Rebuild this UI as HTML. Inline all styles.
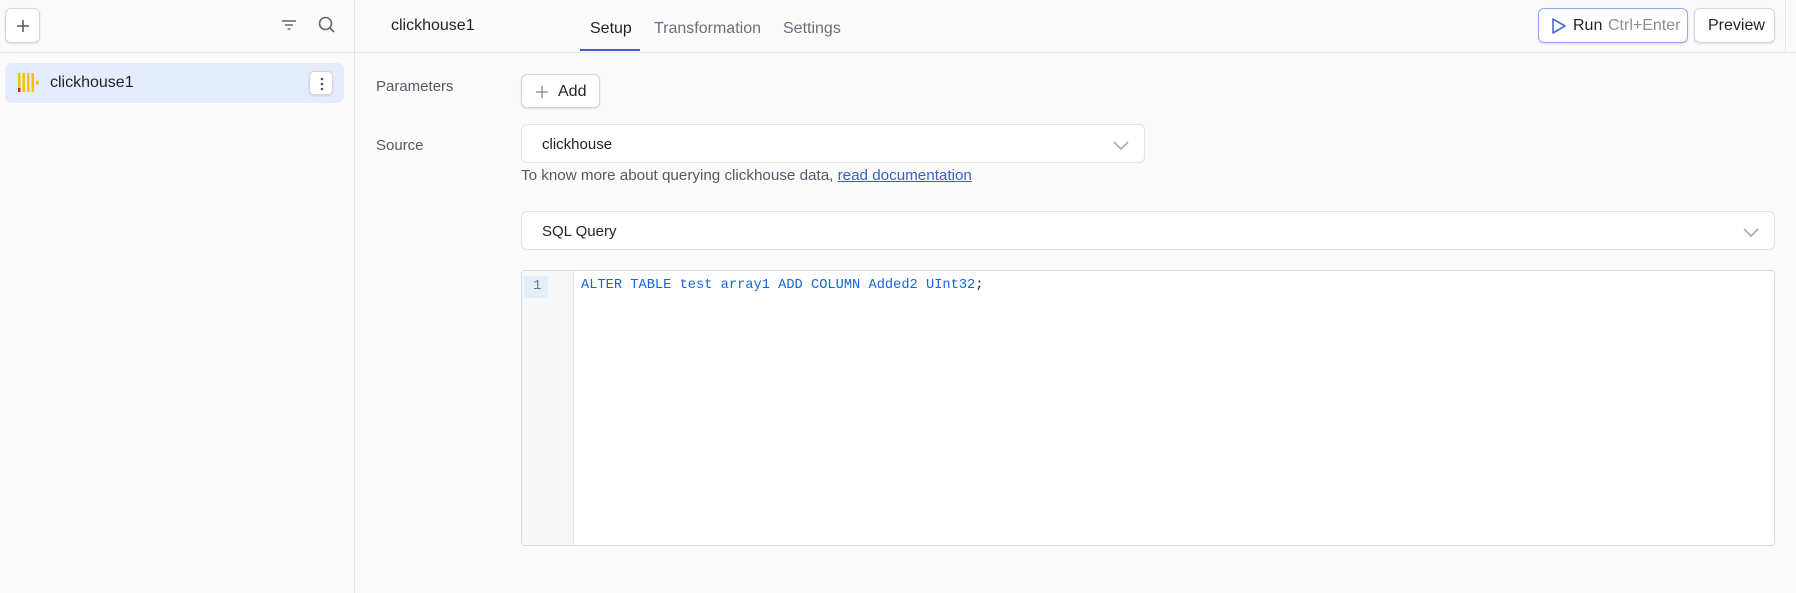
<!DOCTYPE html>
<html><head><style>
*{box-sizing:border-box;margin:0;padding:0}
body{width:1796px;height:593px;background:#fbfbfc;font-family:"Liberation Sans",sans-serif;color:#1f2329;position:relative;overflow:hidden;font-size:15px}
.a{position:absolute}
.btn{position:absolute;background:#fff;border:1px solid #d4d6db;border-radius:6px;box-shadow:0 1px 2px rgba(0,0,0,.12)}
.lbl{color:#545a63;font-size:15px}
</style></head><body>
<div class="a" style="left:354px;top:0;width:1px;height:593px;background:#e4e6ea"></div>
<div class="a" style="left:0;top:52px;width:1796px;height:1px;background:#e4e6ea"></div>
<div class="a" style="left:1785px;top:0;width:1px;height:52px;background:#e4e6ea"></div>

<div class="btn" style="left:5px;top:8px;width:35px;height:35px"><svg class="a" style="left:9px;top:9px" width="16" height="16"><path d="M8 2v12M2 8h12" stroke="#555" stroke-width="1.5"/></svg></div>
<svg class="a" style="left:280px;top:17px" width="18" height="16"><path d="M2 4h14M5 8h8M7.5 12h3" stroke="#666" stroke-width="1.5"/></svg>
<svg class="a" style="left:317px;top:15px" width="20" height="20"><circle cx="8.5" cy="8.5" r="6" fill="none" stroke="#666" stroke-width="1.6"/><path d="M13 13l4 4" stroke="#666" stroke-width="1.6"/></svg>

<div class="a" style="left:5px;top:63px;width:339px;height:40px;background:#e5ecfb;border-radius:7px"></div>
<svg class="a" style="left:18px;top:73px" width="22" height="20"><g fill="#f5c400"><rect x="0" y="0" width="2.5" height="19"/><rect x="4.5" y="0" width="2.5" height="19"/><rect x="9" y="0" width="2.5" height="19"/><rect x="13.5" y="0" width="2.5" height="19"/><rect x="18" y="7.5" width="2.5" height="4"/></g><rect x="0" y="15" width="2.5" height="4" fill="#e02020"/></svg>
<div class="a" style="left:50px;top:74px;font-size:16px">clickhouse1</div>
<div class="btn" style="left:309px;top:71px;width:24px;height:24px;border-radius:5px"><svg class="a" style="left:10px;top:4px" width="4" height="16"><circle cx="2" cy="3" r="1.3" fill="#555"/><circle cx="2" cy="8" r="1.3" fill="#555"/><circle cx="2" cy="13" r="1.3" fill="#555"/></svg></div>

<div class="a" style="left:391px;top:17px;font-size:16px">clickhouse1</div>
<div class="a" style="left:590px;top:20px;font-size:16px;color:#1f2329">Setup</div>
<div class="a" style="left:580px;top:49px;width:60px;height:2px;background:#3a5ccc"></div>
<div class="a" style="left:654px;top:20px;font-size:16px;color:#6a7079">Transformation</div>
<div class="a" style="left:783px;top:20px;font-size:16px;color:#6a7079">Settings</div>

<div class="btn" style="left:1538px;top:8px;width:150px;height:35px;border-color:#8fa9f0"><svg class="a" style="left:12px;top:8px" width="16" height="18"><path d="M2 2l12 7-12 7z" fill="none" stroke="#4a6be0" stroke-width="1.6" stroke-linejoin="round"/></svg><span class="a" style="left:34px;top:8px;font-size:16px">Run</span><span class="a" style="left:69px;top:8px;font-size:16px;color:#8a8f97">Ctrl+Enter</span></div>
<div class="btn" style="left:1694px;top:8px;width:81px;height:35px"><span class="a" style="left:13px;top:8px;font-size:16px">Preview</span></div>

<div class="a lbl" style="left:376px;top:78px">Parameters</div>
<div class="btn" style="left:521px;top:74px;width:79px;height:34px"><svg class="a" style="left:13px;top:10px" width="14" height="14"><path d="M7 1v12M1 7h12" stroke="#888" stroke-width="1.3"/></svg><span class="a" style="left:36px;top:8px;font-size:16px">Add</span></div>

<div class="a lbl" style="left:376px;top:137px">Source</div>
<div class="a" style="left:521px;top:124px;width:624px;height:39px;background:#fff;border:1px solid #e2e4e8;border-radius:6px"><span class="a" style="left:20px;top:11px;font-size:15px">clickhouse</span><svg class="a" style="left:590px;top:14px" width="18" height="12"><path d="M2 3l7 7 7-7" fill="none" stroke="#aaa" stroke-width="1.6"/></svg></div>
<div class="a" style="left:521px;top:167px;font-size:15.2px;color:#545a63">To know more about querying clickhouse data, <span style="color:#3a5ccc;text-decoration:underline">read documentation</span></div>

<div class="a" style="left:521px;top:211px;width:1254px;height:39px;background:#fff;border:1px solid #e2e4e8;border-radius:6px"><span class="a" style="left:20px;top:11px;font-size:15px">SQL Query</span><svg class="a" style="left:1220px;top:14px" width="18" height="12"><path d="M2 3l7 7 7-7" fill="none" stroke="#aaa" stroke-width="1.6"/></svg></div>

<div class="a" style="left:521px;top:270px;width:1254px;height:276px;background:#fff;border:1px solid #d8dade;border-radius:3px;overflow:hidden">
<div class="a" style="left:0;top:0;width:52px;height:276px;background:#f7f7f8;border-right:1px solid #e2e4e8"></div>
<div class="a" style="left:2px;top:5px;width:24px;height:22px;background:#e3eefc"></div>
<div class="a" style="left:11px;top:7px;font-family:'Liberation Mono',monospace;font-size:14px;color:#777">1</div>
<div class="a" style="left:59px;top:7px;font-family:'Liberation Mono',monospace;font-size:13.7px;color:#1565d8;white-space:pre">ALTER TABLE test array1 ADD COLUMN Added2 UInt32<span style="color:#222">;</span></div>
</div>
</body></html>
